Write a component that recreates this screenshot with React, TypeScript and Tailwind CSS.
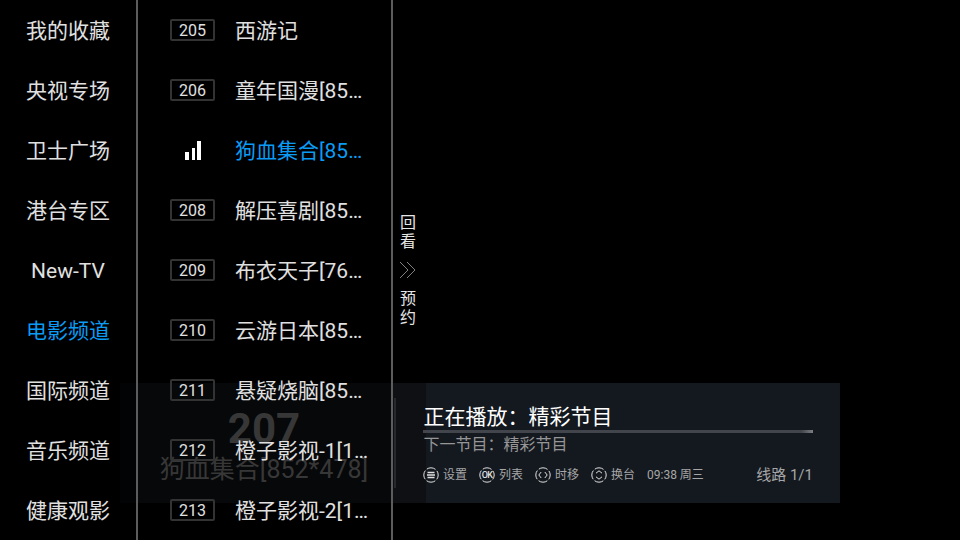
const font = { fontFamily: 'Roboto, "Noto Sans CJK SC", sans-serif' };

const groups = ['我的收藏', '央视专场', '卫士广场', '港台专区', 'New-TV', '电影频道', '国际频道', '音乐频道', '健康观影'];
const channels: [string, string][] = [
  ['205', '西游记'],
  ['206', '童年国漫[852*478]'],
  ['207', '狗血集合[852*478]'],
  ['208', '解压喜剧[852*478]'],
  ['209', '布衣天子[768*576]'],
  ['210', '云游日本[852*478]'],
  ['211', '悬疑烧脑[852*478]'],
  ['212', '橙子影视-1[1280*720]'],
  ['213', '橙子影视-2[1280*720]'],
];

function Ring({ children }: { children: React.ReactNode }) {
  return (
    <svg width="16" height="16" viewBox="0 0 16 16" fill="none" stroke="#e0e0e0" strokeWidth="1">
      <circle cx="8" cy="8" r="7.2" strokeDasharray="9.3 2" strokeDashoffset="4.65" />
      {children}
    </svg>
  );
}

function Hint({ icon, label }: { icon: React.ReactNode; label: string }) {
  return (
    <div className="flex w-[56px] items-center gap-[4px]">
      {icon}
      <span className="text-[12px] leading-[16px] text-[#a6a6a6]">{label}</span>
    </div>
  );
}

export default function App() {
  return (
    <div className="relative h-[540px] w-[960px] overflow-hidden bg-black" style={font}>
      <div className="absolute left-[120px] top-[383px] flex h-[120px] w-[720px]">
        <div className="relative w-[306px] bg-[#0e1014]">
          <div className="flex w-[288px] flex-col items-center">
            <div className="mt-[22px] text-[42px] font-bold leading-[48px] text-[#6e6e6e]">207</div>
            <div className="mt-[0px] text-[25px] leading-[34px] text-[#6e6e6e]">狗血集合[852*478]</div>
          </div>
          <div className="absolute left-[274px] top-[15px] h-[90px] w-[2px] bg-[#25282c]" />
        </div>
        <div className="relative flex-1 bg-[#141920]">
          <div className="ml-[-3px] w-[390px]">
            <div className="ml-[0.5px] mt-[21px] text-[21px] leading-[26px] text-white">正在播放：精彩节目</div>
            <div className="h-[3px] bg-gradient-to-r from-[#42464c] from-[97%] to-[#7c8084]" />
            <div className="ml-[0.5px] text-[16px] leading-[24px] text-[#969696]">下一节目：精彩节目</div>
            <div className="mt-[8px] flex items-center">
              <Hint label="设置" icon={<Ring><path d="M4.5 5.5h7M4 8h8M4.5 10.5h7" strokeWidth="1.4" /></Ring>} />
              <Hint label="列表" icon={<Ring><text x="8" y="11.2" fontSize="9" fontWeight="500" letterSpacing="-0.6" fill="#e0e0e0" stroke="none" textAnchor="middle">OK</text></Ring>} />
              <Hint label="时移" icon={<Ring><path d="M6.2 5 3.8 8l2.4 3M9.8 5l2.4 3-2.4 3" /></Ring>} />
              <Hint label="换台" icon={<Ring><path d="M5 6.2 8 3.8l3 2.4M5 9.8l3 2.4 3-2.4" /></Ring>} />
              <span className="text-[12px] leading-[16px] text-[#a6a6a6]">09:38 周三</span>
              <span className="ml-auto text-[15px] leading-[20px] text-[#a6a6a6]">线路 1/1</span>
            </div>
          </div>
        </div>
      </div>

      <div className="absolute inset-y-0 left-0 flex">
        <div className="flex w-[136px] flex-col bg-black/80">
          {groups.map((g) => (
            <div key={g} className={`flex h-[60px] shrink-0 items-center justify-center pt-[4px] text-[21px] ${g === '电影频道' ? 'text-[#0a9cf5]' : 'text-[#e0e0e0]'}`}>
              {g}
            </div>
          ))}
        </div>
        <div className="w-[2px] bg-[#5c5c5c]" />
        <div className="flex w-[253px] flex-col bg-black/50">
          {channels.map(([n, t]) => {
            const active = n === '207';
            return (
              <div key={n} className="flex h-[60px] shrink-0 items-center pl-[32px]">
                <div className="flex w-[45px] justify-center">
                  {active ? (
                    <svg className="ml-[1px]" width="16" height="19" viewBox="0 0 16 19" fill="#ffffff">
                      <rect x="0" y="11" width="4" height="8" />
                      <rect x="7" y="7" width="3" height="12" />
                      <rect x="12" y="0" width="4" height="19" />
                    </svg>
                  ) : (
                    <div className="flex h-[22px] w-[45px] items-center justify-center rounded-[2px] border-2 border-[#333333] pt-[1px] text-[16px] text-[#e0e0e0]">{n}</div>
                  )}
                </div>
                <div className={`ml-[20px] w-[138px] truncate pt-[4px] text-[21px] ${active ? 'text-[#0a9cf5]' : 'text-[#e0e0e0]'}`}>{t}</div>
              </div>
            );
          })}
        </div>
        <div className="w-[2px] bg-[#5c5c5c]" />
      </div>

      <div className="absolute left-[400px] top-[213px] flex w-[16px] flex-col items-center text-[16px] leading-[19px] text-[#e6e6e6]">
        <span>回</span>
        <span>看</span>
        <svg className="my-[10px]" width="18" height="18" viewBox="0 0 18 18" fill="none" stroke="#808080" strokeWidth="1">
          <path d="M1 1l8 8-8 8M8 1l8 8-8 8" />
        </svg>
        <span>预</span>
        <span>约</span>
      </div>
    </div>
  );
}
